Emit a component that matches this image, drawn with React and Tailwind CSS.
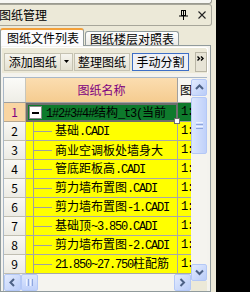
import React from 'react';

const rows = [
  '基础.CADI',
  '商业空调板处墙身大',
  '管底距板高.CADI',
  '剪力墙布置图.CADI',
  '剪力墙布置图-1.CADI',
  '基础顶~3.850.CADI',
  '剪力墙布置图-2.CADI',
  '21.850~27.750柱配筋',
  '27.750~33.750柱配筋',
];

// SimSun-like mix: full width CJK, half width latin
function Txt({ s }) {
  return s
    .split(/([\x00-\x7f]+)/)
    .filter(Boolean)
    .map((p, i) =>
      /^[\x00-\x7f]+$/.test(p) ? (
        <span key={i} className="font-['Liberation_Mono'] text-[12px] tracking-[-1.2px]">
          {p}
        </span>
      ) : (
        <span key={i}>{p}</span>
      )
    );
}

function ScrollBtn({ dir, className = '' }) {
  const d = {
    up: 'M1 5 L4.5 1.5 L8 5',
    down: 'M1 1.5 L4.5 5 L8 1.5',
    left: 'M5 1 L1.5 4.5 L5 8',
    right: 'M1.5 1 L5 4.5 L1.5 8',
  }[dir];
  const vertical = dir === 'up' || dir === 'down';
  return (
    <div
      className={`flex items-center justify-center rounded-[2px] border border-[#B4C8F6] bg-gradient-to-br from-[#E3EBFE] to-[#B9CCF8] ${className}`}
    >
      <svg width={vertical ? 9 : 7} height={vertical ? 7 : 9} viewBox={vertical ? '0 0 9 7' : '0 0 7 9'}>
        <path d={d} fill="none" stroke="#4D6185" strokeWidth="2" />
      </svg>
    </div>
  );
}

export default function App() {
  return (
    <div className="w-[250px] h-[292px] bg-black flex overflow-hidden font-['Noto_Sans_CJK_SC',sans-serif] text-[12px] leading-none text-black">
      <div className="w-[216px] h-full shrink-0 bg-[#ECE9D8] flex flex-col">
        {/* panel above */}
        <div className="h-[4px] w-[212px] shrink-0 bg-[#F7F7F4] border-b border-r border-[#9A9A90] rounded-br-[3px]" />

        {/* title bar */}
        <div className="h-[22px] w-[212px] shrink-0 border-y border-r border-[#A7A69A] rounded-r-[3px] flex items-center">
          <span className="-ml-[1px]">图纸管理</span>
          <div className="flex-1" />
          <svg width="9" height="10" viewBox="0 0 9 10" className="mr-[10px]">
            <rect x="2.5" y="0.5" width="4" height="5" fill="none" stroke="#000" />
            <line x1="4.5" y1="0.5" x2="4.5" y2="5" stroke="#000" />
            <line x1="0" y1="6" x2="9" y2="6" stroke="#000" />
            <line x1="4.5" y1="6" x2="4.5" y2="10" stroke="#000" />
          </svg>
          <svg width="8" height="8" viewBox="0 0 8 8" className="mr-[5px]">
            <path d="M0.5 0.5 L7.5 7.5 M7.5 0.5 L0.5 7.5" stroke="#222" strokeWidth="1.1" />
          </svg>
        </div>

        {/* tabs */}
        <div className="h-[19px] shrink-0 flex items-end relative z-10">
          <div className="h-[18px] w-[84px] -mb-[1px] bg-[#FCFCFE] border-x border-[#919B9C] border-t-2 border-t-[#F2A03A] rounded-t-[3px] flex items-center pl-[6px]">
            图纸文件列表
          </div>
          <div className="h-[14px] w-[94px] ml-[1px] bg-gradient-to-b from-[#FEFEFE] to-[#ECEBE6] border-x border-t border-[#919B9C] rounded-t-[3px] flex items-center pl-[4px]">
            图纸楼层对照表
          </div>
        </div>

        {/* tab content */}
        <div className="flex-1 min-h-0 w-[211px] border border-[#919B9C] bg-[#F4F3EE] flex flex-col overflow-hidden">
          {/* toolbar */}
          <div className="h-[26px] shrink-0 mt-[1px] mx-[1px] w-[206px] border-t border-r border-[#FFFFFF] rounded-tr-[3px] bg-[#ECE9D8] flex items-center pl-[2px] pt-[2px]">
            <div className="h-[18px] w-[58px] border border-[#C5C2B2] bg-gradient-to-b from-[#F6F5EF] to-[#E3E0D0] flex items-center justify-center">
              添加图纸
            </div>
            <div className="h-[18px] w-[12px] border-y border-r border-[#C5C2B2] bg-gradient-to-b from-[#F6F5EF] to-[#E3E0D0] flex items-center justify-center">
              <svg width="5" height="3" viewBox="0 0 5 3">
                <path d="M0 0 H5 L2.5 3 Z" fill="#000" />
              </svg>
            </div>
            <div className="h-[18px] w-[56px] ml-[1px] border border-[#C5C2B2] bg-gradient-to-b from-[#F6F5EF] to-[#E3E0D0] flex items-center justify-center">
              整理图纸
            </div>
            <div className="h-[18px] w-[58px] ml-[2px] border border-[#3E6FC6] bg-[#EEF0F6] flex items-center justify-center">
              手动分割
            </div>
            <div className="h-[20px] w-[12px] ml-[6px] border border-[#B9B6A6] bg-[#E7E4D6] flex items-start justify-center pt-[3px]">
              <svg width="8" height="5" viewBox="0 0 8 5">
                <path d="M0.5 0.5 L2.5 2.5 L0.5 4.5 M4 0.5 L6 2.5 L4 4.5" fill="none" stroke="#000" strokeWidth="1.4" />
              </svg>
            </div>
          </div>

          {/* grid */}
          <div className="mt-[4px] ml-[2px] w-[204px] flex-1 min-h-0 border-t border-l border-[#A9B8C8] bg-[#ECE9D8] flex overflow-hidden">
            <div className="w-[187px] flex flex-col min-h-0">
              {/* header */}
              <div className="h-[25px] shrink-0 flex border-b border-[#A0A0A0]">
                <div className="w-[22px] bg-gradient-to-b from-[#FBFBF8] to-[#EEEDE6] border-r border-[#C8C6BC]" />
                <div className="w-[152px] bg-gradient-to-b from-[#FBDDB0] to-[#F5CC90] border-r border-[#A0A0A0] flex items-center justify-center text-[#800080]">
                  图纸名称
                </div>
                <div className="w-[13px] bg-[#F7F6F1] flex items-center pl-[2px] overflow-hidden">
                  图
                </div>
              </div>

              {/* rows */}
              <div className="flex-1 min-h-0 overflow-hidden bg-[#FFFF00]">
                <div className="h-[19px] flex">
                  <div className="w-[22px] shrink-0 bg-[#F9D5A2] border-b border-r border-[#B8A890] flex items-center justify-center text-[#800080]">
                    1
                  </div>
                  <div className="w-[152px] shrink-0 relative bg-[#0E7A2C] border-2 border-[#6E6E6E] flex items-center overflow-visible whitespace-nowrap">
                    <div className="ml-[1px] w-[13px] h-[13px] bg-white border border-[#8A8A8A] flex items-center justify-center shrink-0">
                      <div className="w-[7px] h-[2px] bg-black" />
                    </div>
                    <div className="ml-[4px] overflow-hidden">
                      <Txt s="1#2#3#4#结构_t3(当前" />
                    </div>
                    <div className="absolute -right-[4px] -bottom-[4px] w-[6px] h-[6px] bg-white border-[1.5px] border-[#6E6E6E]" />
                  </div>
                  <div className="w-[13px] shrink-0 bg-[#0E7A2C] border-b border-[#A0A0A0] flex items-center pl-[3px] overflow-hidden">
                    <Txt s="1:" />
                  </div>
                </div>
                {rows.map((r, i) => (
                  <div key={i} className="h-[19px] flex">
                    <div className="w-[22px] shrink-0 bg-gradient-to-b from-[#F9F8F4] to-[#ECEBE4] border-b border-r border-[#C0BEB2] flex items-center justify-center">
                      {i + 2}
                    </div>
                    <div className="w-[152px] shrink-0 border-b border-r border-[#A8A8A8] flex items-center whitespace-nowrap overflow-hidden">
                      <div className="ml-[7px] w-[1px] h-full bg-[#A0A0A0] shrink-0" />
                      <div className="w-[18px] h-[1px] bg-[#A0A0A0] shrink-0" />
                      <div className="ml-[3px]">
                        <Txt s={r} />
                      </div>
                    </div>
                    <div className="w-[13px] shrink-0 border-b border-[#A8A8A8] flex items-center pl-[3px] overflow-hidden">
                      <Txt s="1:" />
                    </div>
                  </div>
                ))}
              </div>

              {/* horizontal scrollbar */}
              <div className="h-[17px] shrink-0 flex bg-[#F5F4EF]">
                <ScrollBtn dir="left" className="w-[17px] h-[17px]" />
                <div className="w-[17px] h-[17px] rounded-[2px] border border-[#B4C8F6] bg-gradient-to-b from-[#DCE6FD] to-[#C0D1FA] flex items-center justify-center gap-[1px]">
                  <div className="w-[1px] h-[7px] bg-[#EEF3FF]" />
                  <div className="w-[1px] h-[7px] bg-[#8EA6DE]" />
                  <div className="w-[1px] h-[7px] bg-[#EEF3FF]" />
                  <div className="w-[1px] h-[7px] bg-[#8EA6DE]" />
                </div>
                <div className="flex-1" />
                <ScrollBtn dir="right" className="w-[17px] h-[17px]" />
              </div>
            </div>

            {/* vertical scrollbar */}
            <div className="w-[16px] shrink-0 flex flex-col bg-[#F5F4EF] pt-[1px]">
              <ScrollBtn dir="up" className="h-[17px] w-[16px] shrink-0" />
              <div className="h-[57px] w-[16px] shrink-0 mt-[1px] rounded-[2px] border border-[#B4C8F6] bg-gradient-to-r from-[#DCE6FD] to-[#C0D1FA] flex flex-col items-center justify-center gap-[1px]">
                <div className="w-[7px] h-[1px] bg-[#EEF3FF]" />
                <div className="w-[7px] h-[1px] bg-[#8EA6DE]" />
                <div className="w-[7px] h-[1px] bg-[#EEF3FF]" />
                <div className="w-[7px] h-[1px] bg-[#8EA6DE]" />
              </div>
              <div className="h-[110px] shrink-0" />
              <ScrollBtn dir="down" className="h-[17px] w-[16px] shrink-0" />
              <div className="flex-1 bg-[#ECE9D8]" />
            </div>
          </div>
        </div>
      </div>
    </div>
  );
}
